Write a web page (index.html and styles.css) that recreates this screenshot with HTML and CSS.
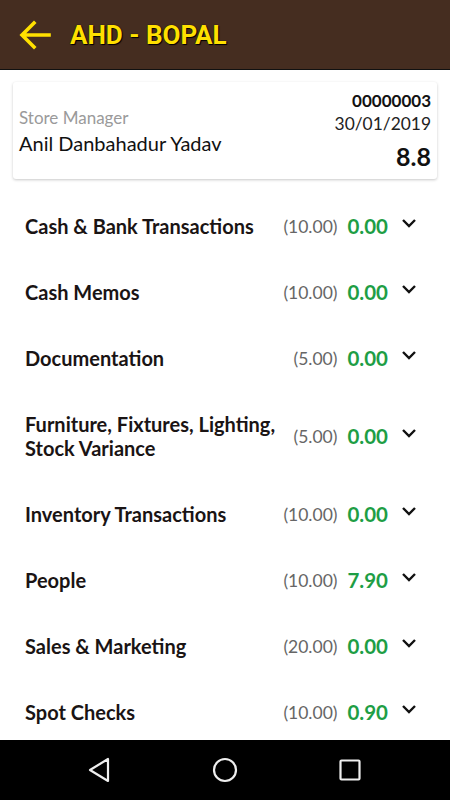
FILE: index.html
```html
<!DOCTYPE html>
<html lang="en">
<head>
    <meta charset="UTF-8">
    <meta name="viewport" content="width=device-width, initial-scale=1.0">
    <title>AHD - BOPAL</title>
    <link rel="stylesheet" href="styles.css">
</head>
<body>
    <div class="app">
        <header class="toolbar">
            <svg class="back" width="32" height="30" viewBox="0 0 32 30">
                <path d="M30 15 H4 M15 3 L3 15 L15 27" fill="none" stroke="#ffe000" stroke-width="3.6" stroke-linecap="square"/>
            </svg>
            <h1>AHD - BOPAL</h1>
        </header>

        <main class="content">
            <div class="card">
                <div class="person">
                    <span class="role">Store Manager</span>
                    <span class="name">Anil Danbahadur Yadav</span>
                </div>
                <div class="meta">
                    <span class="code">00000003</span>
                    <span class="date">30/01/2019</span>
                    <span class="score">8.8</span>
                </div>
            </div>

            <ul class="sections">
                <li class="row">
                    <span class="label">Cash &amp; Bank Transactions</span>
                    <span class="max">(10.00)</span>
                    <span class="value">0.00</span>
                    <svg class="chev" viewBox="0 0 16 10"><path d="M2 2 L8 8 L14 2"/></svg>
                </li>
                <li class="row">
                    <span class="label">Cash Memos</span>
                    <span class="max">(10.00)</span>
                    <span class="value">0.00</span>
                    <svg class="chev" viewBox="0 0 16 10"><path d="M2 2 L8 8 L14 2"/></svg>
                </li>
                <li class="row">
                    <span class="label">Documentation</span>
                    <span class="max">(5.00)</span>
                    <span class="value">0.00</span>
                    <svg class="chev" viewBox="0 0 16 10"><path d="M2 2 L8 8 L14 2"/></svg>
                </li>
                <li class="row">
                    <span class="label">Furniture, Fixtures, Lighting, Stock Variance</span>
                    <span class="max">(5.00)</span>
                    <span class="value">0.00</span>
                    <svg class="chev" viewBox="0 0 16 10"><path d="M2 2 L8 8 L14 2"/></svg>
                </li>
                <li class="row">
                    <span class="label">Inventory Transactions</span>
                    <span class="max">(10.00)</span>
                    <span class="value">0.00</span>
                    <svg class="chev" viewBox="0 0 16 10"><path d="M2 2 L8 8 L14 2"/></svg>
                </li>
                <li class="row">
                    <span class="label">People</span>
                    <span class="max">(10.00)</span>
                    <span class="value">7.90</span>
                    <svg class="chev" viewBox="0 0 16 10"><path d="M2 2 L8 8 L14 2"/></svg>
                </li>
                <li class="row">
                    <span class="label">Sales &amp; Marketing</span>
                    <span class="max">(20.00)</span>
                    <span class="value">0.00</span>
                    <svg class="chev" viewBox="0 0 16 10"><path d="M2 2 L8 8 L14 2"/></svg>
                </li>
                <li class="row">
                    <span class="label">Spot Checks</span>
                    <span class="max">(10.00)</span>
                    <span class="value">0.90</span>
                    <svg class="chev" viewBox="0 0 16 10"><path d="M2 2 L8 8 L14 2"/></svg>
                </li>
            </ul>
        </main>

        <nav class="navbar">
            <svg width="24" height="28" viewBox="0 0 24 28">
                <path d="M20 3 L20 25 L2 14 Z" fill="none" stroke="#eee" stroke-width="2.2" stroke-linejoin="round"/>
            </svg>
            <svg width="26" height="26" viewBox="0 0 26 26">
                <circle cx="13" cy="13" r="11" fill="none" stroke="#eee" stroke-width="2.2"/>
            </svg>
            <svg width="22" height="22" viewBox="0 0 22 22">
                <rect x="1.5" y="1.5" width="19" height="19" rx="1" fill="none" stroke="#eee" stroke-width="2.2"/>
            </svg>
        </nav>
    </div>
</body>
</html>
```

FILE: styles.css
```css
/* Base */
body {
    margin: 0;
    font-family: 'Lato', sans-serif;
    color: #111;
    background-color: #ffffff;
}

.app {
    height: 800px;
    display: flex;
    flex-direction: column;
    overflow: hidden;
}

/* Top bar */
.toolbar {
    height: 69px;
    flex-shrink: 0;
    display: flex;
    align-items: center;
    padding-left: 19px;
    background-color: #452d20;
    border-bottom: 1px solid #111;
}

.back {
    margin-right: 19px;
}

.toolbar h1 {
    margin: 0;
    font-family: 'Roboto', sans-serif;
    font-size: 26px;
    font-weight: 700;
    color: #ffe000;
    text-shadow: 0 0 1px #000, 1px 1px 1px #000;
}

/* Content */
.content {
    flex: 1;
    overflow: hidden;
}

.card {
    margin: 12px 13px 0;
    padding: 8px 6px 8px 6px;
    display: flex;
    justify-content: space-between;
    align-items: center;
    border-radius: 3px;
    background-color: #fff;
    box-shadow: 0 1px 3px rgba(0, 0, 0, 0.22);
}

.person {
    display: flex;
    flex-direction: column;
}

.role {
    font-size: 17px;
    color: #9a9a9a;
    line-height: 24px;
}

.name {
    font-size: 20px;
    color: #111;
    line-height: 26px;
}

.meta {
    display: flex;
    flex-direction: column;
    align-items: flex-end;
}

.code {
    font-size: 17px;
    font-weight: 700;
    line-height: 22px;
}

.date {
    font-size: 17.4px;
    line-height: 24px;
    color: #222;
}

.score {
    font-size: 25px;
    font-weight: 700;
    line-height: 30px;
    margin-top: 5px;
}

/* Section list */
.sections {
    list-style: none;
    margin: 14px 0 0;
    padding: 0;
}

.row {
    display: flex;
    align-items: center;
    padding: 21px 33px 21px 25px;
}

.row .label {
    flex: 1;
    font-size: 20px;
    font-weight: 700;
    line-height: 24px;
    color: #1a1414;
}

.row .max {
    font-size: 17.5px;
    color: #666;
    margin-left: 8px;
}

.row .value {
    font-size: 20.5px;
    font-weight: 700;
    color: #1e9e45;
    margin-left: 10px;
}

.chev {
    width: 16px;
    height: 10px;
    margin-left: 13px;
    margin-top: -6px;
    fill: none;
    stroke: #111;
    stroke-width: 2.4;
}

/* Android nav */
.navbar {
    height: 60px;
    flex-shrink: 0;
    background-color: #000;
    display: grid;
    grid-template-columns: repeat(3, 125px);
    justify-content: center;
    justify-items: center;
    align-items: center;
}
```
